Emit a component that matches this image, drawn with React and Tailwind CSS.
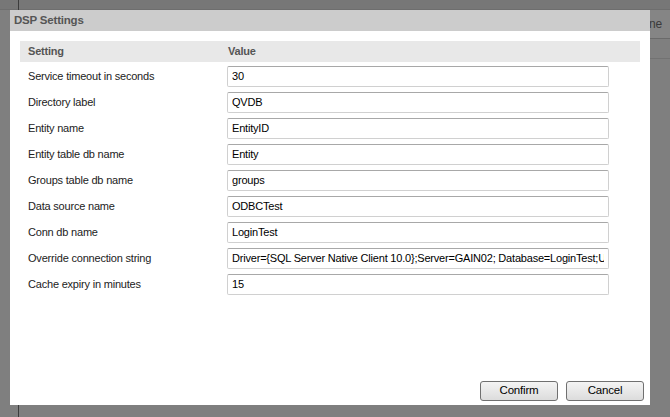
import React from 'react';

const rows = [
  { label: 'Service timeout in seconds', value: '30' },
  { label: 'Directory label', value: 'QVDB' },
  { label: 'Entity name', value: 'EntityID' },
  { label: 'Entity table db name', value: 'Entity' },
  { label: 'Groups table db name', value: 'groups' },
  { label: 'Data source name', value: 'ODBCTest' },
  { label: 'Conn db name', value: 'LoginTest' },
  {
    label: 'Override connection string',
    value: 'Driver={SQL Server Native Client 10.0};Server=GAIN02; Database=LoginTest;Uid=sa;Pwd=secret;',
  },
  { label: 'Cache expiry in minutes', value: '15' },
];

const App = () => {
  return (
    <div className="relative w-[670px] h-[417px] overflow-hidden bg-[#7f7f7f] font-['Liberation_Sans',sans-serif] tracking-[-0.2px]">
      {/* page behind the overlay */}
      <div className="h-[10px] bg-[#777777] border-b border-[#6e6e6e]" />
      <div className="absolute left-[18px] top-0 w-px h-[10px] bg-[#3c3c3c]" />
      <div className="absolute left-[18px] top-[405px] w-px h-[12px] bg-[#3c3c3c]" />
      <div className="absolute left-[650px] top-[10px] w-[20px] h-[29px] bg-[#858585] border-b border-[#6a6a6a] flex items-center">
        <span className="text-[12px] text-[#3a3a3a] -ml-[1px]">ne</span>
      </div>
      <div className="absolute left-[650px] top-[58px] w-[20px] h-px bg-[#727272]" />

      {/* dialog */}
      <div className="absolute left-[10px] top-[10px] w-[640px] h-[395px] bg-white flex flex-col">
        <div className="h-[21px] bg-[#cccccc] flex items-center px-[4px]">
          <span className="text-[11.5px] font-bold text-[#555555]">DSP Settings</span>
        </div>
        <div className="flex-1 px-[10px] pt-[10px]">
          <div className="h-[21px] bg-[#e8e8e8] flex items-center text-[11px] font-bold text-[#555555]">
            <span className="w-[208px] pl-[8px]">Setting</span>
            <span>Value</span>
          </div>
          <div className="pt-[1px]">
            {rows.map((r) => (
              <div key={r.label} className="h-[26px] flex items-center text-[11px]">
                <span className="w-[207px] pl-[8px] text-[#222222]">{r.label}</span>
                <input
                  readOnly
                  value={r.value}
                  className="w-[382px] h-[21px] border border-[#d0d0d0] border-t-[#a8a8a8] rounded-[2px] px-[4px] text-[11px] tracking-[-0.2px] text-black outline-none font-['Liberation_Sans',sans-serif]"
                />
              </div>
            ))}
          </div>
        </div>
        <div className="flex justify-end gap-[8px] pr-[6px] pb-[4px]">
          <button className="w-[78px] h-[20px] rounded-[3px] border border-[#707070] bg-gradient-to-b from-[#f4f4f4] to-[#dcdcdc] text-[11.5px] text-black">
            Confirm
          </button>
          <button className="w-[78px] h-[20px] rounded-[3px] border border-[#707070] bg-gradient-to-b from-[#f4f4f4] to-[#dcdcdc] text-[11.5px] text-black">
            Cancel
          </button>
        </div>
      </div>
    </div>
  );
};

export default App;
